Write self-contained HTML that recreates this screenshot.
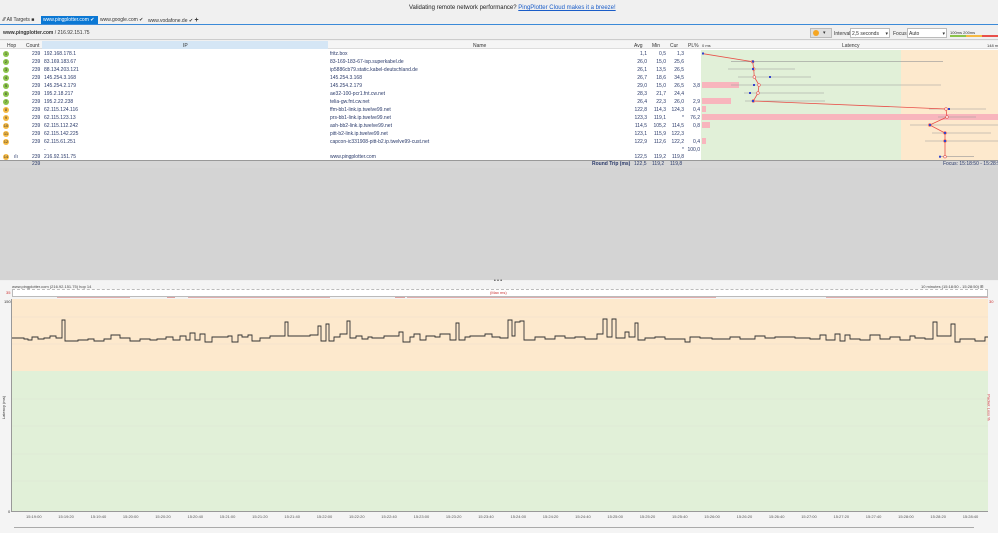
<!DOCTYPE html>
<html><head><meta charset="utf-8"><style>
*{margin:0;padding:0;box-sizing:border-box}
body{width:998px;height:533px;overflow:hidden;background:#f0f0f0;font-family:"Liberation Sans",sans-serif;font-size:5px;color:#333;position:relative}
.a{position:absolute;white-space:nowrap}
.r{position:absolute;left:0;width:701px;height:8px;font-size:5px;line-height:8px;color:#2a3a6a}
.r span{position:absolute}
.c{position:absolute;left:3px;top:1px;width:6px;height:6px;border-radius:50%;font-size:4px;line-height:6px;text-align:center;color:#333}
</style></head><body>
<!-- banner -->
<div class="a" style="left:0;top:0;width:998px;height:16px;background:#f0f0f0"></div>
<div class="a" style="left:409px;top:5px;font-size:6px;color:#222">Validating remote network performance? <span style="color:#1a5dc8;text-decoration:underline">PingPlotter Cloud makes it a breeze!</span></div>
<!-- tabs -->
<div class="a" style="left:3px;top:17px;font-size:5px;color:#333">⁄⁄⁄ All Targets ■</div>
<div class="a" style="left:41px;top:16px;width:57px;height:8px;background:#0b78d4"></div>
<div class="a" style="left:43px;top:17px;font-size:5px;color:#fff">www.pingplotter.com ✔</div>
<div class="a" style="left:100px;top:17px;font-size:5px;color:#333">www.google.com ✔</div>
<div class="a" style="left:148px;top:17px;font-size:5px;color:#333">www.vodafone.de ✔ <b style="font-size:7px">+</b></div>
<div class="a" style="left:0;top:24px;width:998px;height:1px;background:#3b8ad8"></div>
<!-- address row -->
<div class="a" style="left:0;top:25px;width:998px;height:15px;background:#f0f0f0;border-bottom:1px solid #ccc"></div>
<div class="a" style="left:3px;top:30px;font-size:5px;color:#333"><b>www.pingplotter.com</b> / 216.92.151.75</div>
<div class="a" style="left:810px;top:28px;width:22px;height:10px;background:#e0e0e0;border:1px solid #bbb"></div>
<div class="a" style="left:813px;top:30px;width:6px;height:6px;border-radius:50%;background:#f5a623"></div>
<div class="a" style="left:823px;top:30px;font-size:5px">▾</div>
<div class="a" style="left:834px;top:31px;font-size:5px">Interval</div>
<div class="a" style="left:850px;top:28px;width:40px;height:10px;background:#fff;border:1px solid #bbb;font-size:5px;padding:2px 1px">2,5 seconds <span style="float:right">▾</span></div>
<div class="a" style="left:893px;top:31px;font-size:5px">Focus</div>
<div class="a" style="left:907px;top:28px;width:40px;height:10px;background:#fff;border:1px solid #bbb;font-size:5px;padding:2px 1px">Auto <span style="float:right">▾</span></div>
<div class="a" style="left:950px;top:30px;font-size:4px">100ms 200ms</div>
<div class="a" style="left:950px;top:35px;width:16px;height:2px;background:#8bc34a"></div>
<div class="a" style="left:966px;top:35px;width:16px;height:2px;background:#f5b942"></div>
<div class="a" style="left:982px;top:35px;width:16px;height:2px;background:#e8504a"></div>
<!-- table -->
<div class="a" style="left:0;top:41px;width:998px;height:120px;background:#fff"></div>
<div class="a" style="left:0;top:41px;width:998px;height:8px;background:#f5f5f5;border-bottom:1px solid #ddd;font-size:5px;line-height:8px;color:#333"></div>
<div class="a" style="left:42px;top:41px;width:286px;height:8px;background:#d5e6f5"></div>
<div class="a" style="left:7px;top:43px">Hop</div><div class="a" style="left:26px;top:43px">Count</div>
<div class="a" style="left:183px;top:43px">IP</div><div class="a" style="left:473px;top:43px">Name</div>
<div class="a" style="left:634px;top:43px">Avg</div><div class="a" style="left:652px;top:43px">Min</div>
<div class="a" style="left:670px;top:43px">Cur</div><div class="a" style="left:688px;top:43px">PL%</div>
<div class="a" style="left:702px;top:43px;font-size:4px">0 ms</div><div class="a" style="left:842px;top:43px">Latency</div><div class="a" style="left:987px;top:43px;font-size:4px">148 ms</div>
<div class="a" style="left:701px;top:50px;width:200px;height:110px;background:#e1f0d8"></div>
<div class="a" style="left:901px;top:50px;width:97px;height:110px;background:#fde9cd"></div>
<div id="rows"></div>
<svg class="a" style="left:0;top:0" width="998" height="170">
<g fill="#f8b5bd"><rect x="702" y="82" width="37" height="6"/><rect x="702" y="98" width="29" height="6"/><rect x="702" y="106" width="4" height="6"/><rect x="702" y="114" width="296" height="6"/><rect x="702" y="122" width="8" height="6"/><rect x="702" y="138" width="4" height="6"/></g>
<g stroke="#999" stroke-width="0.6"><line x1="731" y1="61.7" x2="943" y2="61.7"/><line x1="728" y1="69" x2="795" y2="69"/><line x1="738" y1="77" x2="811" y2="77"/><line x1="731" y1="85" x2="941" y2="85"/><line x1="744" y1="93" x2="824" y2="93"/><line x1="745" y1="101" x2="825" y2="101"/><line x1="929" y1="109" x2="986" y2="109"/><line x1="938" y1="117" x2="976" y2="117"/><line x1="910" y1="125" x2="998" y2="125"/><line x1="932" y1="133" x2="991" y2="133"/><line x1="925" y1="141" x2="998" y2="141"/><line x1="939" y1="156.7" x2="974" y2="156.7"/></g>
<polyline fill="none" stroke="#e8504a" stroke-width="0.8" points="703,53.7 752.7,61.7 753.7,69 754.3,77 759,85 758,93 753.3,101 946,109 947,117 929.7,125 945,133 945,141 945,156.7"/>
<g fill="#fff" stroke="#e8504a" stroke-width="0.6"><circle cx="752.7" cy="61.7" r="1.3"/><circle cx="753.7" cy="69" r="1.3"/><circle cx="754.3" cy="77" r="1.3"/><circle cx="759" cy="85" r="1.3"/><circle cx="758" cy="93" r="1.3"/><circle cx="753.3" cy="101" r="1.3"/><circle cx="946" cy="109" r="1.3"/><circle cx="947" cy="117" r="1.3"/><circle cx="929.7" cy="125" r="1.3"/><circle cx="945" cy="133" r="1.3"/><circle cx="945" cy="141" r="1.3"/><circle cx="945" cy="156.7" r="1.3"/></g>
<g fill="#3344cc"><rect x="702" y="52.5" width="2" height="2"/><rect x="752" y="60.5" width="2" height="2"/><rect x="752" y="68" width="2" height="2"/><rect x="769" y="76" width="2" height="2"/><rect x="753" y="84" width="2" height="2"/><rect x="749" y="92" width="2" height="2"/><rect x="752" y="100" width="2" height="2"/><rect x="948" y="108" width="2" height="2"/><rect x="929" y="124" width="2" height="2"/><rect x="944" y="132" width="2" height="2"/><rect x="944" y="140" width="2" height="2"/><rect x="939" y="155.7" width="2" height="2"/></g>
</svg>
<div class="a" style="left:0;top:160px;width:998px;height:8px;background:#d6d6d6;border-top:1px solid #999;font-size:5px;line-height:7px;color:#2a3a6a"></div>
<div class="a" style="left:32px;top:161px;font-size:5px;color:#2a3a6a">239</div>
<div class="a" style="left:592px;top:161px;font-size:5px;color:#2a3a6a"><b>Round Trip (ms)</b></div>
<div class="a" style="left:634px;top:161px;color:#2a3a6a">122,5</div><div class="a" style="left:652px;top:161px;color:#2a3a6a">119,2</div><div class="a" style="left:670px;top:161px;color:#2a3a6a">119,8</div>
<div class="a" style="left:943px;top:161px;color:#2a3a6a">Focus: 15:18:50 - 15:28:50</div>
<!-- gray gap -->
<div class="a" style="left:0;top:168px;width:998px;height:112px;background:#d4d4d4"></div>
<div class="a" style="left:494px;top:278px;font-size:5px">• • •</div>
<!-- bottom chart -->
<div class="a" style="left:0;top:281px;width:998px;height:252px;background:#f4f4f4"></div>
<div class="a" style="left:12px;top:284px;font-size:4px;color:#444">www.pingplotter.com (216.92.151.75) hop 14</div>
<div class="a" style="left:921px;top:284px;font-size:4px;color:#444">10 minutes (15:18:50 - 15:28:50) ⊞</div>
<div class="a" style="left:12px;top:289px;width:976px;height:8px;background:#fff;border:1px solid #bbb;border-top:1px dashed #bbb"></div>
<div class="a" style="left:6px;top:290px;font-size:4px;color:#c33">35</div>
<div class="a" style="left:490px;top:290px;font-size:4px;color:#c33">(Max ms)</div>
<div class="a" style="left:12px;top:299px;width:976px;height:72px;background:#fde9cd"></div>
<div class="a" style="left:12px;top:371px;width:976px;height:140px;background:#e1f0d8"></div>
<div class="a" style="left:11px;top:299px;width:1px;height:213px;background:#999"></div>
<div class="a" style="left:11px;top:511px;width:977px;height:1px;background:#999"></div>
<div class="a" style="left:4px;top:299px;font-size:4px">150</div>
<div class="a" style="left:8px;top:509px;font-size:4px">0</div>
<div class="a" style="left:989px;top:299px;font-size:4px;color:#c33">30</div>
<div class="a" style="left:-8px;top:405px;font-size:4px;transform:rotate(-90deg)">Latency (ms)</div>
<div class="a" style="left:976px;top:405px;font-size:4px;color:#c33;transform:rotate(90deg)">Packet Loss %</div>
<svg class="a" style="left:0;top:0" width="998" height="533">
<g stroke="#ccc" stroke-width="0.3" opacity="0.6"><line x1="12" x2="988" y1="317" y2="317"/><line x1="12" x2="988" y1="344" y2="344"/><line x1="12" x2="988" y1="399" y2="399"/><line x1="12" x2="988" y1="426" y2="426"/><line x1="12" x2="988" y1="454" y2="454"/><line x1="12" x2="988" y1="481" y2="481"/></g>
<g stroke="#c66" stroke-width="0.6"><line x1="57" x2="130" y1="297.5" y2="297.5"/><line x1="167" x2="175" y1="297.5" y2="297.5"/><line x1="188" x2="330" y1="297.5" y2="297.5"/><line x1="395" x2="405" y1="297.5" y2="297.5"/><line x1="407" x2="716" y1="297.5" y2="297.5"/><line x1="826" x2="988" y1="297.5" y2="297.5"/></g>
<polyline fill="none" stroke="#333" stroke-width="0.9" points="12,338 24,338 24,339 28,339 28,340 32,340 32,337 38,337 38,339 44,339 44,338 50,338 50,336 56,336 56,338 62,338 62,320 65,320 65,341 78,341 78,340 88,340 88,339 94,339 94,341 104,341 104,339 111,339 111,335 120,335 120,338 130,338 130,341 140,341 140,339 150,339 150,340 157,340 157,339 166,339 166,337 173,337 173,340 180,340 180,336 186,336 186,340 190,340 190,333 195,333 195,340 200,340 200,334 205,334 205,342 212,342 212,337 220,337 220,337 228,337 228,336 232,336 232,342 238,342 238,335 242,335 242,337 248,337 248,335 252,335 252,341 260,341 260,338 270,338 270,336 280,336 280,336 285,336 285,322 288,322 288,336 300,336 300,336 310,336 310,335 318,335 318,326 321,326 321,341 326,341 326,324 329,324 329,341 334,341 334,337 340,337 340,334 347,334 347,321 350,321 350,338 356,338 356,336 362,336 362,339 368,339 368,337 372,337 372,338 384,338 384,336 399,336 399,332 403,332 403,342 410,342 410,337 414,337 414,334 420,334 420,340 426,340 426,336 435,336 435,337 440,337 440,334 450,334 450,340 456,340 456,323 459,323 459,340 465,340 465,337 470,337 470,336 485,336 485,334 492,334 492,337 500,337 500,338 508,338 508,320 512,320 512,336 515,336 515,322 520,322 520,321 524,321 524,340 535,340 535,337 545,337 545,339 555,339 555,336 565,336 565,338 575,338 575,337 585,337 585,339 597,339 597,334 603,334 603,319 607,319 607,337 612,337 612,319 616,319 616,338 625,338 625,332 629,332 629,337 635,337 635,323 638,323 638,340 645,340 645,338 655,338 655,337 665,337 665,339 675,339 675,339 685,339 685,342 690,342 690,337 700,337 700,338 712,338 712,339 730,339 730,337 740,337 740,339 755,339 755,336 765,336 765,338 775,338 775,337 795,337 795,338 810,338 810,339 820,339 820,335 826,335 826,340 835,340 835,334 840,334 840,341 845,341 845,335 850,335 850,339 860,339 860,340 870,340 870,335 880,335 880,339 890,339 890,337 900,337 900,340 910,340 910,336 915,336 915,338 925,338 925,339 933,339 933,322 937,322 937,336 945,336 945,336 951,336 951,324 955,324 955,342 960,342 960,339 975,339 975,341 985,341 985,337 988,337"/>
</svg>
<div id="xl"></div>
<div class="a" style="left:14px;top:527px;width:960px;height:1px;background:#aaa"></div>
<script>
var rows=[["1","239","192.168.178.1","fritz.box","1,1","0,5","1,3","","#8bc34a"],["2","239","83.169.183.67","83-169-183-67-isp.superkabel.de","26,0","15,0","25,6","","#8bc34a"],["3","239","88.134.203.121","ip5886cb79.static.kabel-deutschland.de","26,1","13,5","26,5","","#8bc34a"],["4","239","145.254.3.168","145.254.3.168","26,7","18,6","34,5","","#8bc34a"],["5","239","145.254.2.179","145.254.2.179","29,0","15,0","26,5","3,8","#8bc34a"],["6","239","195.2.18.217","ae32-100-pcr1.fnt.cw.net","28,3","21,7","24,4","","#8bc34a"],["7","239","195.2.22.238","telia-gw.fnt.cw.net","26,4","22,3","26,0","2,9","#8bc34a"],["8","239","62.115.124.116","ffm-bb1-link.ip.twelve99.net","122,8","114,3","124,3","0,4","#f5b942"],["9","239","62.115.123.13","prs-bb1-link.ip.twelve99.net","123,3","119,1","*","76,2","#f5b942"],["10","239","62.115.112.242","ash-bb2-link.ip.twelve99.net","114,5","105,2","114,5","0,8","#f5b942"],["11","239","62.115.142.225","pitt-b2-link.ip.twelve99.net","123,1","115,9","122,3","","#f5b942"],["12","239","62.115.61.251","capcon-ic331908-pitt-b2.ip.twelve99-cust.net","122,9","112,6","122,2","0,4","#f5b942"],["","","-","","","","*","100,0",""],["14","239","216.92.151.75","www.pingplotter.com","122,5","119,2","119,8","","#f5b942"]];
var h="";rows.forEach(function(r,i){var t=50+i*8;if(i==13)t=153;h+='<div class="r" style="top:'+t+'px">'+(r[8]?'<div class="c" style="background:'+r[8]+'">'+r[0]+'</div>':'')+(i==13?'<span style="left:14px">ılı</span>':'')+'<span style="left:32px">'+r[1]+'</span><span style="left:44px">'+r[2]+'</span><span style="left:330px">'+r[3]+'</span><span style="right:54px">'+r[4]+'</span><span style="right:35px">'+r[5]+'</span><span style="right:17px">'+r[6]+'</span><span style="right:1px">'+r[7]+'</span></div>';});
document.getElementById("rows").innerHTML=h;
var x="";for(var i=0;i<30;i++){var s=19*60+i*20,m=Math.floor(s/60),sec=s%60;x+='<div class="a" style="left:'+(26+i*32.3)+'px;top:514px;font-size:4px;color:#555">15:'+m+':'+(sec<10?'0':'')+sec+'</div>';}
document.getElementById("xl").innerHTML=x;
</script>
</body></html>
